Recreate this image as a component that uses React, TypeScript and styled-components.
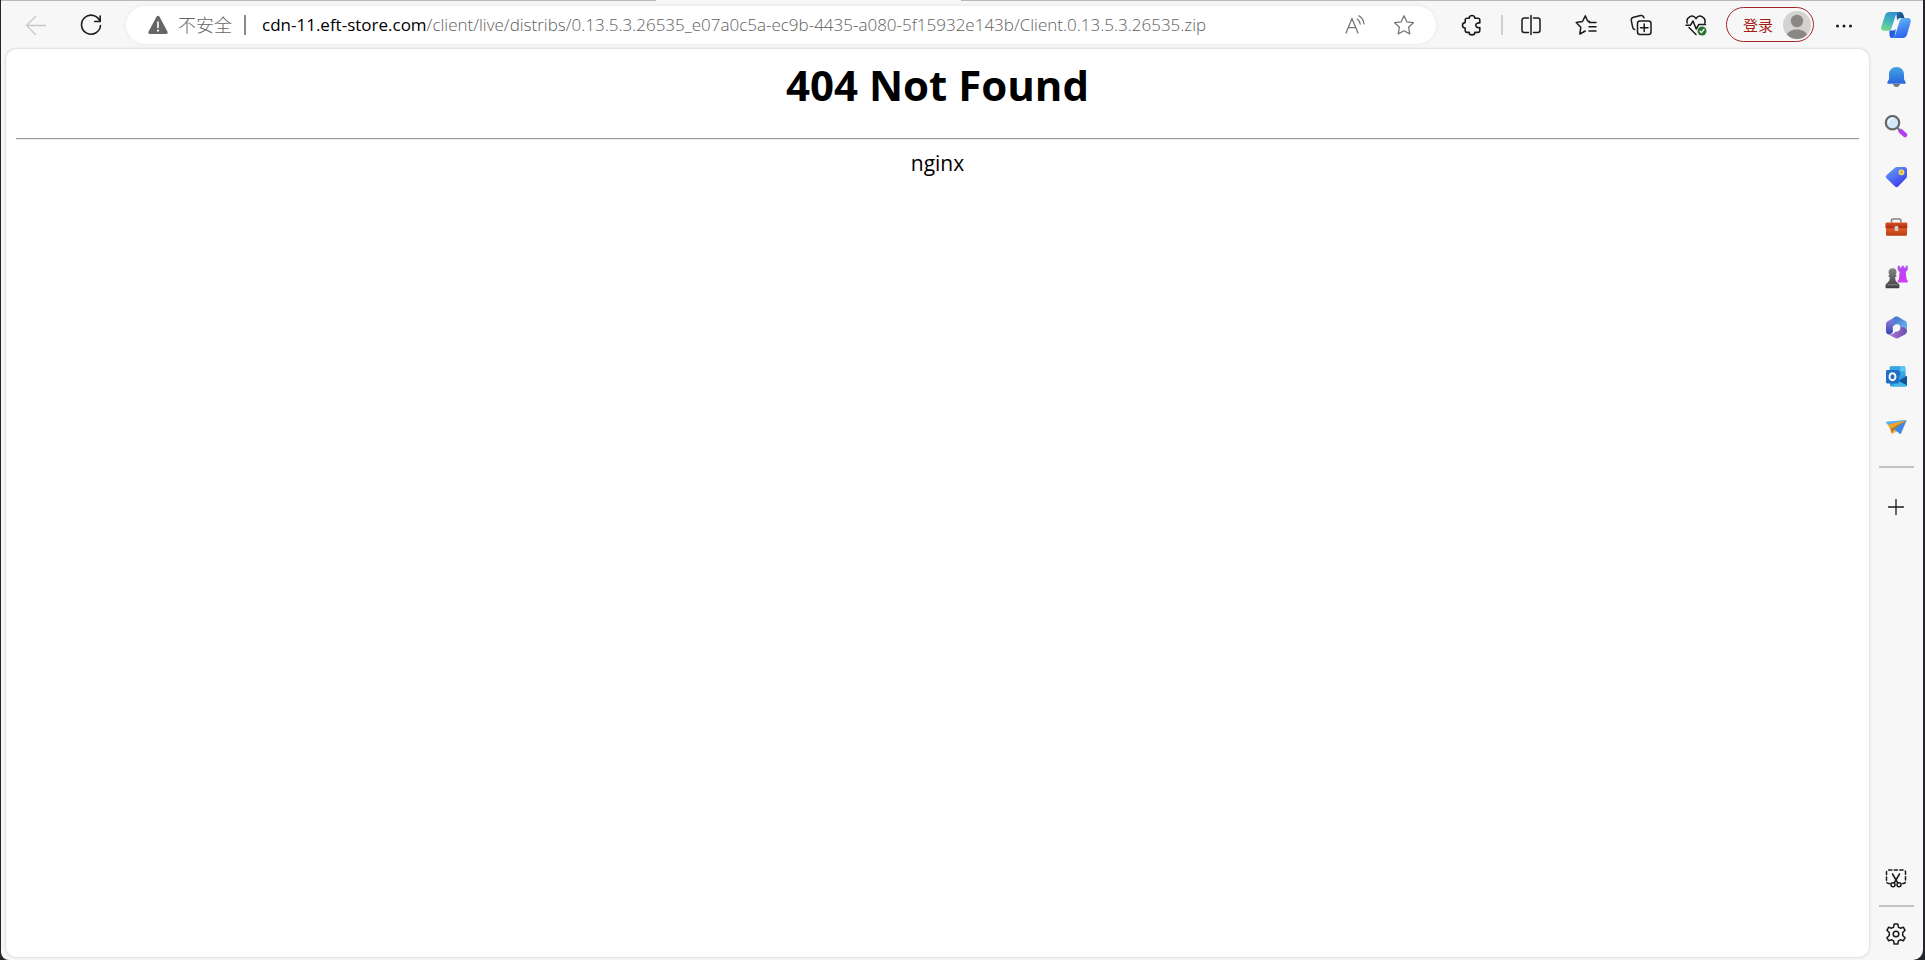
import React from 'react';
import styled, { createGlobalStyle } from 'styled-components';

const GlobalStyle = createGlobalStyle`
  *, *::before, *::after { box-sizing: border-box; }
  body {
    margin: 0;
    background: #25262b;
    font-family: "Open Sans", "Noto Sans CJK SC", sans-serif;
    color: #000;
  }
  button, input { font: inherit; color: inherit; }
`;

const Window = styled.div`
  display: flex;
  min-height: 100vh;
  margin: 0 2px 0 1px;
  background: #f7f7f7;
  border-radius: 0 0 10px 8px;
  overflow: hidden;
`;

const Main = styled.div`
  flex: 1;
  min-width: 0;
  display: flex;
  flex-direction: column;
`;

const TabEdge = styled.div`
  display: flex;
  height: 1px;
`;

const TabEdgeLine = styled.div<{ $grow: number }>`
  flex: ${(p) => p.$grow} 1 0;
  background: #b9b9b9;
`;

const ActiveTabGap = styled.div`
  width: 305px;
`;

const Toolbar = styled.header`
  display: flex;
  align-items: center;
  height: 48px;
  padding: 0 5px 1px 15px;
`;

const IconButton = styled.button<{ $tone?: string }>`
  display: flex;
  align-items: center;
  justify-content: center;
  flex: none;
  width: 40px;
  height: 34px;
  padding: 0;
  border: 0;
  border-radius: 6px;
  background: transparent;
  color: ${(p) => p.$tone ?? '#1b1b1b'};
`;

const NavButtons = styled.div`
  display: flex;
  gap: 15px;
  margin-right: 15px;
`;

const AddressBar = styled.form`
  flex: 1;
  min-width: 0;
  display: flex;
  align-items: center;
  height: 38px;
  padding: 0 12px 0 22px;
  border-radius: 19px;
  background: #fff;
  box-shadow: 0 0 4px rgba(0, 0, 0, 0.08);
  font-size: 17px;
`;

const SecurityButton = styled.button`
  display: flex;
  align-items: center;
  gap: 10px;
  padding: 0;
  border: 0;
  background: transparent;
  color: #666;
  font-size: 18px;
  font-weight: 300;
  line-height: 24px;
`;

const Divider = styled.span<{ $tone: string }>`
  flex: none;
  width: 2px;
  height: 20px;
  background: ${(p) => p.$tone};
`;

const SecurityDivider = styled(Divider)`
  margin: 0 16px 0 12px;
`;

const ToolDivider = styled(Divider)`
  margin: 0 8px 0 9px;
`;

const Host = styled.label`
  line-height: 24px;
`;

const PathInput = styled.input`
  flex: 1;
  min-width: 0;
  height: 24px;
  padding: 0;
  border: 0;
  outline: 0;
  background: transparent;
  color: #5e5e5e;
  font-weight: 300;
  line-height: 24px;
`;

const AddressActions = styled.div`
  display: flex;
  gap: 9px;
`;

const Tools = styled.div`
  display: flex;
  align-items: center;
  margin-left: 16px;
`;

const ToolRow = styled.div`
  display: flex;
  gap: 15px;
  margin-right: 10px;
`;

const SignIn = styled.button`
  display: flex;
  align-items: center;
  justify-content: space-between;
  width: 88px;
  height: 35px;
  margin-right: 10px;
  padding: 0 2px 0 16px;
  border: 1px solid #a4262c;
  border-radius: 18px;
  background: transparent;
  color: #a81d16;
  font-size: 15px;
  line-height: 20px;
  white-space: nowrap;
`;

const Page = styled.main`
  flex: 1;
  margin: 0 0 3px 5px;
  padding: 0 10px;
  border-radius: 10px;
  background: #fff;
  box-shadow: 0 0 3px rgba(0, 0, 0, 0.22);
  text-align: center;
`;

const Title = styled.h1`
  margin: 7px 0 24px;
  font-size: 42px;
  font-weight: 700;
  line-height: 58px;
`;

const Rule = styled.hr`
  height: 2px;
  margin: 0 0 8px;
  border: 0;
  border-top: 1px solid #999;
  border-bottom: 1px solid #ececec;
`;

const Server = styled.p`
  margin: 0;
  font-size: 21px;
  line-height: 30px;
`;

const Sidebar = styled.aside`
  display: flex;
  flex-direction: column;
  align-items: center;
  flex: none;
  width: 54px;
  border-top: 1px solid #b9b9b9;
  padding: 7px 0 9px;
`;

const SidebarApps = styled.nav`
  display: flex;
  flex-direction: column;
  gap: 16px;
  margin: 18px 0 22px;
`;

const SidebarLine = styled.hr`
  width: 35px;
  height: 2px;
  margin: 0;
  border: 0;
  background: #c3c3c3;
`;

const SidebarAdd = styled.div`
  flex: 1;
  padding-top: 22px;
`;

const SidebarFoot = styled.div`
  display: flex;
  flex-direction: column;
  align-items: center;
  gap: 10px;
`;

type GlyphProps = { children: React.ReactNode; size?: number; w?: number };

const Line = ({ children, size = 22, w = 1.3 }: GlyphProps) => (
  <svg width={size} height={size} viewBox="0 0 22 22" fill="none" stroke="currentColor"
    strokeWidth={w} strokeLinecap="round" strokeLinejoin="round" aria-hidden="true">
    {children}
  </svg>
);

const Art = ({ children, size = 24 }: GlyphProps) => (
  <svg width={size} height={size} viewBox="0 0 24 24" fill="none" aria-hidden="true">
    {children}
  </svg>
);

const Grad = ({ id, from, to, x2 = 0, y2 = 1 }: { id: string; from: string; to: string; x2?: number; y2?: number }) => (
  <linearGradient id={id} x1="0" y1="0" x2={x2} y2={y2}>
    <stop stopColor={from} />
    <stop offset="1" stopColor={to} />
  </linearGradient>
);

const BackIcon = () => <Line><path d="M20.500 11.500H1.500M10.500 2.500l-9 9 9 9" /></Line>;

const ReloadIcon = () => (
  <Line w={1.6}><path d="M20 7.500A9.500 9.500 0 1 0 20.500 11.500M20.200 2v5.500h-5.500" /></Line>
);

const WarningIcon = () => (
  <svg width="20" height="20" viewBox="0 0 20 20" aria-hidden="true">
    <path d="M8.600 1.600 .5 16.800A1.500 1.500 0 0 0 1.800 19h16.400a1.500 1.500 0 0 0 1.300-2.200L11.400 1.600a1.600 1.600 0 0 0-2.800 0Z" fill="#666" />
    <path d="M10 7v5.500" stroke="#fff" strokeWidth="1.600" strokeLinecap="round" />
    <circle cx="10" cy="15.600" r="1.100" fill="#fff" />
  </svg>
);

const ReadAloudIcon = () => (
  <Line w={1.3}><path d="M2 19 8 4.500 14 19M4.200 13.700h7.600M13.200 5c1.800 1.200 2.800 2.700 3 5M14.800 1.800c3 1.700 4.900 4.600 5.200 8" /></Line>
);

const starPath = 'M11 1.800l2.800 6 6.600.9-4.800 4.600 1.200 6.600L11 16.800l-5.800 3.100 1.200-6.600-4.800-4.600 6.600-.9Z';

const StarIcon = () => <Line><path d={starPath} /></Line>;

const PuzzleIcon = () => (
  <Line w={1.6}><path d="M8.200 4.200C8.200 2.600 9.400 1.500 11 1.500s2.800 1.100 2.800 2.700H17a1.800 1.800 0 0 1 1.800 1.800v3c-2.300-.4-4 .6-4 2.300s1.700 2.700 4 2.300v3a1.800 1.800 0 0 1-1.800 1.800h-3.200c0 1.600-1.200 2.500-2.800 2.500s-2.800-.9-2.800-2.500H6A1.800 1.800 0 0 1 4.200 16.600V14C2.600 14 1.500 12.900 1.500 11.300S2.600 8.600 4.200 8.600V6A1.800 1.800 0 0 1 6 4.200Z" /></Line>
);

const SplitIcon = () => (
  <Line w={1.5}><path d="M8.500 4H4.200A2.200 2.200 0 0 0 2 6.200v10A2.200 2.200 0 0 0 4.200 18.400h4.300M13.500 4h4.300A2.200 2.200 0 0 1 20 6.200v10a2.200 2.200 0 0 1-2.200 2.200h-4.300M11 1.500v19" /></Line>
);

const FavoritesIcon = () => (
  <Line w={1.5}><path d="M14.500 7.400 12.600 7 10.300 1.800 7.500 7.500 1.200 8.500l4.600 4.800-1 6.700 5.500-3M14 8.500h7M14 12.800h7M14 17h7" /></Line>
);

const CollectionsIcon = () => (
  <Line w={1.5}>
    <path d="M4.600 15.500A3 3 0 0 1 2.700 13.300L1.300 6.600A3 3 0 0 1 3.600 3.200l7-1.600A3 3 0 0 1 14 3.700" />
    <rect x="7.500" y="7" width="13.500" height="13.500" rx="2.500" />
    <path d="M14.200 10v7.500M10.500 13.700H18" />
  </Line>
);

const HealthIcon = () => (
  <Line w={1.5}>
    <path d="M2.200 9C.6 3.500 7.500-.6 11 4.600 14.500-.6 21.400 3.500 19.800 9M4 13.500l7 7M1 11.200h4.500L8 7l3.200 8 2.600-4.500h6.700" />
    <circle cx="17" cy="17" r="4.500" fill="#28752d" stroke="none" />
    <path d="m15 17.200 1.400 1.300 2.600-3" stroke="#fff" strokeWidth="1.200" />
  </Line>
);

const Avatar = () => (
  <svg width="28" height="28" viewBox="0 0 28 28" aria-hidden="true">
    <circle cx="14" cy="14" r="14" fill="#d3d2d0" />
    <circle cx="14" cy="10" r="6.200" fill="#898887" />
    <path d="M4 23.800C5.500 20 9.500 18.500 14 18.500s8.500 1.500 10 5.300A14 14 0 0 1 14 28 14 14 0 0 1 4 23.800Z" fill="#898887" />
  </svg>
);

const MoreIcon = () => (
  <Line><g fill="currentColor" stroke="none"><circle cx="4.500" cy="12" r="1.500" /><circle cx="11" cy="12" r="1.500" /><circle cx="17.500" cy="12" r="1.500" /></g></Line>
);

const CopilotIcon = () => (
  <svg width="32" height="32" viewBox="0 0 32 32" aria-hidden="true">
    <defs>
      <linearGradient id="cpA" x1="0.600" y1="0" x2="0.200" y2="1">
        <stop stopColor="#2f93cf" /><stop offset="0.500" stopColor="#46b5bb" /><stop offset="1" stopColor="#79dc8c" />
      </linearGradient>
      <Grad id="cpB" from="#66bff4" to="#2f66ee" x2={0.3} />
      <Grad id="cpC" from="#2672b6" to="#173f66" x2={1} />
      <Grad id="cpD" from="#1b49d6" to="#2d6ff0" x2={1} />
    </defs>
    <path d="M16 3h4.500c1.500 0 2.300 1 2.700 2.300L24.500 9h-4c-1.800 0-2.800 1-3.300 2.500Z" fill="url(#cpC)" />
    <path d="M9.500 21.500H13c1.500 0 2.400-.8 2.900-2.200l-1 7.700c-.6 1.500-1.600 2-3 2-1.300 0-2-.8-2.300-2Z" fill="url(#cpD)" />
    <path d="M9.200 3H19c-1.500 0-2.400.9-3 2.500l-4.600 14c-.6 1.500-1.500 2.300-3 2.300H4.300c-2.800 0-3.800-1.700-3-4.300L5 6.500C5.700 4.200 7 3 9.200 3Z" fill="url(#cpA)" />
    <path d="M22.800 29H12c1.700 0 2.600-1 3.100-2.600l4.500-14.600C20.200 9.900 21 9 22.700 9h4.900c2.600 0 3.700 1.700 3 4.300L27 25.500c-.7 2.300-2 3.500-4.200 3.500Z" fill="url(#cpB)" />
  </svg>
);

const BellIcon = () => (
  <Art>
    <defs><Grad id="bell" from="#41a4e4" to="#2c65e0" /></defs>
    <path d="M9 19h7c-.5 1.800-1.800 3-3.500 3S9.500 20.800 9 19Z" fill="#777" />
    <path d="M12.500 2C7.900 2 5 5.200 5 9.500V14l-1.700 3.500c-.3.700 0 1.200.8 1.200h16.800c.8 0 1.100-.5.8-1.200L20 14V9.500C20 5.200 17.100 2 12.500 2Z" fill="url(#bell)" />
  </Art>
);

const SearchIcon = () => (
  <Art>
    <path d="m16.500 16 4.500 4" stroke="#b63df0" strokeWidth="4.400" strokeLinecap="round" />
    <path d="m13 12.500 3 3" stroke="#777" strokeWidth="2" />
    <circle cx="8.500" cy="7.700" r="6.700" fill="#d2e8fb" stroke="#686868" strokeWidth="2.200" />
    <path d="M4.500 7.200a4.300 4.300 0 0 1 4-4" stroke="#f5fbff" strokeWidth="1.500" strokeLinecap="round" />
  </Art>
);

const TagIcon = () => (
  <Art>
    <defs><Grad id="tag" from="#69a8f8" to="#3a38ee" x2={0.7} /></defs>
    <path d="M13 2h7.500C22 2 23 3 23 4.500V11c0 .9-.3 1.500-.9 2.200l-8 8.200c-1 1-2 1-3 0l-8.600-8.100c-1-1-1-2 0-3l8.300-7.500C11.500 2.200 12 2 13 2Z" fill="url(#tag)" />
    <circle cx="17.500" cy="7.300" r="2.200" fill="#d4a85b" stroke="#fbdf54" strokeWidth="1.400" />
  </Art>
);

const ToolboxIcon = () => (
  <Art>
    <defs><Grad id="boxTop" from="#db5028" to="#a92b0c" /><Grad id="boxLow" from="#e6612a" to="#b93b13" /></defs>
    <path d="M7.500 7.500V5.700c0-1.100.7-1.700 1.700-1.700h6c1 0 1.700.6 1.700 1.700v1.800" stroke="#828282" strokeWidth="1.600" />
    <path d="M2 12.500h21v7a1.300 1.300 0 0 1-1.300 1.300H3.300A1.300 1.300 0 0 1 2 19.500Z" fill="url(#boxLow)" />
    <path d="M3 7.500h19c.8 0 1.300.5 1.300 1.300v4.500H1.500V8.800C1.500 8 2.200 7.500 3 7.500Z" fill="url(#boxTop)" />
    <rect x="10.700" y="11" width="3.600" height="5" rx="1.200" fill="#d2d0cf" />
  </Art>
);

const GamesIcon = () => (
  <Art>
    <defs><Grad id="pawn" from="#858585" to="#3e3e3e" /><Grad id="rook" from="#b04cf5" to="#d33cf5" /></defs>
    <path d="M13.700.800h2v1.800h1.900V.800h2.200v1.800h1.900V.800h2V5l-1.900 2 .7 7 1.300 2v1.500H13.700V16l1.200-2 .7-7-1.900-2Z" fill="url(#rook)" />
    <path d="M8.500 3.200a4 4 0 0 1 4 4c0 1.300-.5 2.200-1.200 2.900h1v2h-1.200c0 3 .8 4.700 2.900 6.200.9.600 1.400 1.500 1.400 2.600V22c0 .9-.5 1.300-1.300 1.300H2.800c-.8 0-1.300-.4-1.300-1.300v-1.100c0-1.100.5-2 1.400-2.600 2.100-1.500 2.900-3.200 2.900-6.200H4.700v-2h1A4 4 0 0 1 8.500 3.200Z" fill="url(#pawn)" />
    <path d="M3 19.800h11" stroke="#898989" strokeWidth="1" />
  </Art>
);

const M365Icon = () => (
  <Art>
    <defs>
      <Grad id="mA" from="#3f6ccb" to="#74c4f4" x2={1} />
      <Grad id="mB" from="#9a86e4" to="#3747b5" />
      <Grad id="mC" from="#b878d8" to="#6b4fae" x2={1} y2={0} />
    </defs>
    <path d="M11.500 1.700 4 6C2.700 6.800 2 7.800 2 9.300v6.900c0 1.300.8 2.400 2 3.100 2 .5 4-.5 5-2.500L8.700 12 12 9Z" fill="url(#mB)" />
    <path d="M9.500 2.800 11 2c1.200-.6 2.200-.6 3.400 0l6.600 3.700c1.300.7 2 1.900 2 3.300v8l-7-4.300-1.500-3.200L9 10.500Z" fill="url(#mA)" />
    <path d="M3.500 19 11 23.100c1.200.6 2.200.6 3.400 0l6.600-3.700c1.300-.7 2-1.700 2-3.100 0-2-1.300-3.200-3-4.100l-4.500-.4-1 3.400-2.500 1L9.500 18.500c-2 1-4 1.200-6 .5Z" fill="url(#mC)" />
    <path d="m12 9.200 3 .2 1.400 2.300-.3 2.900-2 1.900h-3l-2-2v-3.200Z" fill="#f7f7f7" />
  </Art>
);

const OutlookIcon = () => (
  <Art>
    <path d="M7 1.500h13c.8 0 1.300.5 1.300 1.300V12H5.700V2.800c0-.8.500-1.300 1.300-1.300Z" fill="#1c70b8" />
    <path d="M6 1.500h10.200v4.800H6ZM16.200 6.300h5.100v5.200h-5.100Z" fill="#35a7e8" />
    <path d="M16.200 1.500H20c.8 0 1.300.5 1.300 1.300v3.700h-5.100Z" fill="#59cbf3" />
    <path d="M6 10.500h10.500L23 11v9c0 .9-.5 1.500-1.400 1.500H7.400c-.9 0-1.400-.6-1.400-1.500Z" fill="#2f9be4" />
    <path d="M23 11v9.500L14 16Z" fill="#155496" />
    <path d="m14 15.700 9 4.900c-.3.600-.8.900-1.400.9H8Z" fill="#42b8ed" />
    <rect x="2" y="5" width="13" height="13.500" rx="1.400" fill="#1f6fc2" />
    <ellipse cx="8.500" cy="11.700" rx="3" ry="3.500" stroke="#fff" strokeWidth="1.900" />
  </Art>
);

const SendIcon = () => (
  <Art>
    <path d="M1.700 7 22.700 5 4.500 10.500Z" fill="#55aef4" />
    <path d="M22.700 5 3.700 9.300 5.500 12.700 7.700 18.700 10.300 15Z" fill="#eba52c" />
    <path d="M22.700 5 7 13.500l.7 5.200 2.600-4.200Z" fill="#b5782c" />
    <path d="M1.700 7 22.700 5 3.900 9.600Z" fill="#55aef4" />
    <path d="M22.700 5 16.700 19.300 9.800 14.500Z" fill="#3c87ec" />
    <path d="m7.700 18.700 2.300-4 2.900 1.900Z" fill="#f0b23b" />
  </Art>
);

const PlusIcon = () => <Line w={1.3}><path d="M11 3.500v15M3.500 11h15" /></Line>;

const ScreenshotIcon = () => (
  <Line w={1.5}>
    <path d="M5 16.500H3.500A2 2 0 0 1 1.500 14.500V5A2 2 0 0 1 3.500 3h15A2 2 0 0 1 20.500 5v9.500a2 2 0 0 1-2 2H17" strokeDasharray="3.200 2.400" />
    <path d="M7.500 7l5.300 9M14.500 7l-5.300 9" />
    <circle cx="8" cy="17.700" r="2" /><circle cx="14" cy="17.700" r="2" />
  </Line>
);

const GearIcon = () => (
  <Line w={1.5}>
    <path d="M9.200 1h3.600l.6 3.100 1.900 1.100 3-1 1.800 3.100L17.700 9.500v3l2.400 2.200-1.800 3.100-3-1-1.900 1.100-.6 3.100H9.200l-.6-3.100-1.900-1.100-3 1-1.800-3.100 2.400-2.200v-3L1.900 7.300l1.800-3.100 3 1 1.900-1.100Z" />
    <circle cx="11" cy="11" r="2.800" />
  </Line>
);

const sidebarApps = [
  { name: '通知', Icon: BellIcon },
  { name: '搜索', Icon: SearchIcon },
  { name: '购物', Icon: TagIcon },
  { name: '工具', Icon: ToolboxIcon },
  { name: '游戏', Icon: GamesIcon },
  { name: 'Microsoft 365', Icon: M365Icon },
  { name: 'Outlook', Icon: OutlookIcon },
  { name: 'Drop', Icon: SendIcon },
];

export default function App() {
  return (
    <>
      <GlobalStyle />
      <Window>
        <Main>
          <TabEdge>
            <TabEdgeLine $grow={13} />
            <ActiveTabGap />
            <TabEdgeLine $grow={18} />
          </TabEdge>
          <Toolbar>
            <NavButtons>
              <IconButton $tone="#c8c8c8" aria-label="后退" disabled><BackIcon /></IconButton>
              <IconButton aria-label="刷新"><ReloadIcon /></IconButton>
            </NavButtons>
            <AddressBar onSubmit={(e) => e.preventDefault()}>
              <SecurityButton type="button"><WarningIcon />不安全</SecurityButton>
              <SecurityDivider $tone="#8a8a8a" />
              <Host htmlFor="address">cdn-11.eft-store.com</Host>
              <PathInput
                id="address"
                type="text"
                spellCheck={false}
                defaultValue="/client/live/distribs/0.13.5.3.26535_e07a0c5a-ec9b-4435-a080-5f15932e143b/Client.0.13.5.3.26535.zip"
              />
              <AddressActions>
                <IconButton type="button" $tone="#777" aria-label="大声朗读"><ReadAloudIcon /></IconButton>
                <IconButton type="button" $tone="#777" aria-label="收藏此页"><StarIcon /></IconButton>
              </AddressActions>
            </AddressBar>
            <Tools>
              <IconButton aria-label="扩展"><PuzzleIcon /></IconButton>
              <ToolDivider $tone="#cfcfcf" />
              <ToolRow>
                <IconButton aria-label="拆分屏幕"><SplitIcon /></IconButton>
                <IconButton aria-label="收藏夹"><FavoritesIcon /></IconButton>
                <IconButton aria-label="集锦"><CollectionsIcon /></IconButton>
                <IconButton aria-label="浏览器概要"><HealthIcon /></IconButton>
              </ToolRow>
              <SignIn>登录<Avatar /></SignIn>
              <IconButton aria-label="设置及其他"><MoreIcon /></IconButton>
            </Tools>
          </Toolbar>
          <Page>
            <Title>404 Not Found</Title>
            <Rule />
            <Server>nginx</Server>
          </Page>
        </Main>
        <Sidebar>
          <IconButton aria-label="Copilot"><CopilotIcon /></IconButton>
          <SidebarApps>
            {sidebarApps.map(({ name, Icon }) => (
              <IconButton key={name} aria-label={name}><Icon /></IconButton>
            ))}
          </SidebarApps>
          <SidebarLine />
          <SidebarAdd>
            <IconButton aria-label="自定义"><PlusIcon /></IconButton>
          </SidebarAdd>
          <SidebarFoot>
            <IconButton aria-label="屏幕截图"><ScreenshotIcon /></IconButton>
            <SidebarLine />
            <IconButton aria-label="设置"><GearIcon /></IconButton>
          </SidebarFoot>
        </Sidebar>
      </Window>
    </>
  );
}
